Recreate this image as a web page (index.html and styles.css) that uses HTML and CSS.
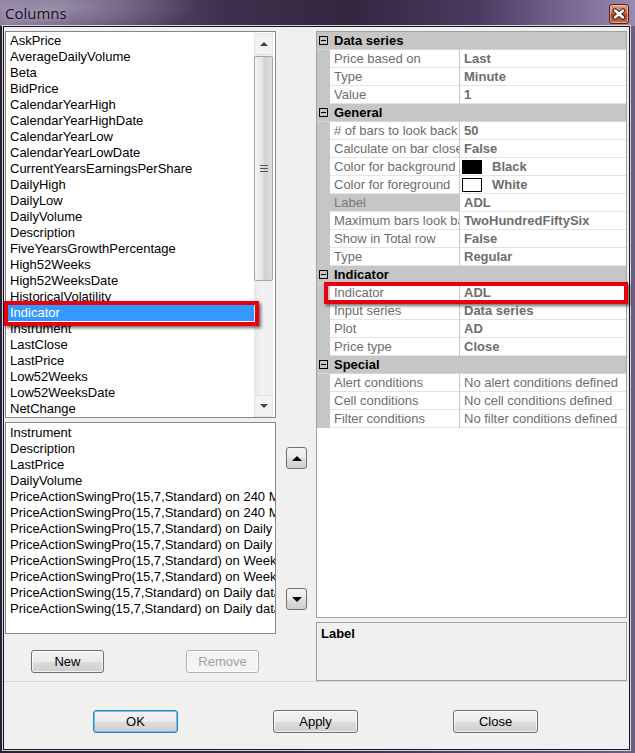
FILE: index.html
```html
<!DOCTYPE html>
<html lang="en">
<head>
  <meta charset="UTF-8" />
  <title>Columns</title>
  <link rel="stylesheet" href="styles.css">
</head>
<body>
  <div class="window">
    <div class="titlebar">
      <span class="title">Columns</span>
      <button class="close-x" title="Close">
        <svg width="14" height="12" viewBox="0 0 14 12">
          <path d="M3 2.5 L11 9.5 M11 2.5 L3 9.5" stroke="#3b2f33" stroke-width="4.6" stroke-linecap="round" fill="none"/>
          <path d="M3 2.5 L11 9.5 M11 2.5 L3 9.5" stroke="#fff" stroke-width="2.4" stroke-linecap="round" fill="none"/>
        </svg>
      </button>
    </div>

    <div class="client">
      <div class="panes">
        <!-- available columns / chosen columns -->
        <div class="col-left">
          <div class="listbox available">
            <ul class="items">
              <li>AskPrice</li>
              <li>AverageDailyVolume</li>
              <li>Beta</li>
              <li>BidPrice</li>
              <li>CalendarYearHigh</li>
              <li>CalendarYearHighDate</li>
              <li>CalendarYearLow</li>
              <li>CalendarYearLowDate</li>
              <li>CurrentYearsEarningsPerShare</li>
              <li>DailyHigh</li>
              <li>DailyLow</li>
              <li>DailyVolume</li>
              <li>Description</li>
              <li>FiveYearsGrowthPercentage</li>
              <li>High52Weeks</li>
              <li>High52WeeksDate</li>
              <li>HistoricalVolatility</li>
              <li class="selected">Indicator<span class="mark"></span></li>
              <li>Instrument</li>
              <li>LastClose</li>
              <li>LastPrice</li>
              <li>Low52Weeks</li>
              <li>Low52WeeksDate</li>
              <li>NetChange</li>
            </ul>
            <div class="vscroll">
              <div class="sb-arrow"><span class="tri up"></span></div>
              <div class="thumb"><span class="grip"></span></div>
              <div class="track"></div>
              <div class="sb-arrow"><span class="tri down"></span></div>
            </div>
          </div>

          <div class="listbox chosen">
            <ul class="items">
              <li>Instrument</li>
              <li>Description</li>
              <li>LastPrice</li>
              <li>DailyVolume</li>
              <li>PriceActionSwingPro(15,7,Standard) on 240 Minute data</li>
              <li>PriceActionSwingPro(15,7,Standard) on 240 Minute data</li>
              <li>PriceActionSwingPro(15,7,Standard) on Daily data</li>
              <li>PriceActionSwingPro(15,7,Standard) on Daily data</li>
              <li>PriceActionSwingPro(15,7,Standard) on Weekly data</li>
              <li>PriceActionSwingPro(15,7,Standard) on Weekly data</li>
              <li>PriceActionSwing(15,7,Standard) on Daily data</li>
              <li>PriceActionSwing(15,7,Standard) on Daily data</li>
            </ul>
          </div>

          <div class="list-buttons">
            <button class="btn">New</button>
            <button class="btn" disabled>Remove</button>
          </div>
        </div>

        <div class="col-mid">
          <button class="move"><span class="tri up"></span></button>
          <button class="move"><span class="tri down"></span></button>
        </div>

        <!-- property grid for the selected column -->
        <div class="col-right">
          <div class="pgrid">
            <div class="cat"><span class="toggle"></span>Data series</div>
            <div class="prop"><span class="name">Price based on</span><span class="val">Last</span></div>
            <div class="prop"><span class="name">Type</span><span class="val">Minute</span></div>
            <div class="prop"><span class="name">Value</span><span class="val">1</span></div>

            <div class="cat"><span class="toggle"></span>General</div>
            <div class="prop"><span class="name"># of bars to look back</span><span class="val">50</span></div>
            <div class="prop"><span class="name">Calculate on bar close</span><span class="val">False</span></div>
            <div class="prop"><span class="name">Color for background</span><span class="val"><span class="swatch black"></span>Black</span></div>
            <div class="prop"><span class="name">Color for foreground</span><span class="val"><span class="swatch white"></span>White</span></div>
            <div class="prop current"><span class="name">Label</span><span class="val">ADL</span></div>
            <div class="prop"><span class="name">Maximum bars look back</span><span class="val">TwoHundredFiftySix</span></div>
            <div class="prop"><span class="name">Show in Total row</span><span class="val">False</span></div>
            <div class="prop"><span class="name">Type</span><span class="val">Regular</span></div>

            <div class="cat"><span class="toggle"></span>Indicator</div>
            <div class="prop marked"><span class="name">Indicator</span><span class="val">ADL</span><span class="mark"></span></div>
            <div class="prop"><span class="name">Input series</span><span class="val">Data series</span></div>
            <div class="prop"><span class="name">Plot</span><span class="val">AD</span></div>
            <div class="prop"><span class="name">Price type</span><span class="val">Close</span></div>

            <div class="cat"><span class="toggle"></span>Special</div>
            <div class="prop"><span class="name">Alert conditions</span><span class="val plain">No alert conditions defined</span></div>
            <div class="prop"><span class="name">Cell conditions</span><span class="val plain">No cell conditions defined</span></div>
            <div class="prop"><span class="name">Filter conditions</span><span class="val plain">No filter conditions defined</span></div>
          </div>
          <div class="help"><b>Label</b></div>
        </div>
      </div>

      <div class="footer">
        <button class="btn wide default">OK</button>
        <button class="btn wide">Apply</button>
        <button class="btn wide">Close</button>
      </div>
    </div>
  </div>
</body>
</html>
```

FILE: styles.css
```css
* {
  box-sizing: border-box;
}

body {
  margin: 0;
  background: #2a1f33;
  font-family: "Liberation Sans", Arial, sans-serif;
  font-size: 13px;
}

ul {
  list-style: none;
  margin: 0;
  padding: 0;
}

button {
  font-family: inherit;
  font-size: 13px;
}

.window {
  width: 635px;
  height: 753px;
  display: flex;
  flex-direction: column;
  background: linear-gradient(to right, #2a1f33 0, #3b2d49 50%, #6c5d82 100%);
  overflow: hidden;
}

/* title bar */
.titlebar {
  height: 26px;
  flex: none;
  display: flex;
  align-items: center;
  justify-content: space-between;
  padding: 0 6px 0 5px;
  background:
    radial-gradient(ellipse 140px 30px at 60px 6px, rgba(190, 180, 200, 0.5), transparent),
    linear-gradient(to right, #85789a 0, #625476 15%, #3f304d 35%, #34263f 55%, #4a3a60 75%, #9a8ab2 100%);
}

.title {
  font-family: "Open Sans", "Noto Sans", sans-serif;
  font-size: 15px;
  color: #14101c;
  text-shadow: 0 0 6px rgba(230, 225, 235, 0.7);
}

.close-x {
  width: 20px;
  height: 20px;
  margin-top: 1px;
  padding: 0;
  border: 1px solid #4a2424;
  border-radius: 3px;
  background: linear-gradient(#e8a08c, #d0603f 50%, #b8381c 51%, #d06a44);
  display: flex;
  align-items: center;
  justify-content: center;
  box-shadow: inset 0 0 0 1px rgba(255, 220, 200, 0.5);
}

/* dialog body */
.client {
  flex: 1;
  margin: 0 5px 3px 3px;
  background: #f0f0f0;
  border: 1px solid #1a141e;
  box-shadow: 0 0 0 1px #d8d4dc;
  display: flex;
  flex-direction: column;
}

.panes {
  display: grid;
  grid-template-columns: 271px 40px 311px;
  padding: 4px 0 0 1px;
  height: 654px;
}

.col-left {
  display: flex;
  flex-direction: column;
}

.listbox {
  border: 1px solid #828790;
  background: #fff;
  display: flex;
}

.listbox.available {
  height: 387px;
  padding-top: 1px;
}

.listbox.chosen {
  height: 212px;
  margin-top: 4px;
  padding-top: 2px;
}

.items {
  flex: 1;
  min-width: 0;
}

.items li {
  height: 16px;
  line-height: 16px;
  padding-left: 4px;
  white-space: nowrap;
  overflow: hidden;
  color: #000;
}

.listbox.available .items li {
  overflow: visible;
}

.items li.selected {
  position: relative;
  background: #3399ff;
  color: #fff;
}

/* red call-out frames */
.mark {
  position: absolute;
  border: 4px solid #e8000c;
  box-shadow: 2px 2px 3px rgba(0, 0, 0, 0.55);
  pointer-events: none;
}

.items li.selected .mark {
  top: -4px;
  left: -2px;
  right: -5px;
  bottom: -5px;
}

/* vertical scrollbar */
.vscroll {
  width: 19px;
  margin-right: 2px;
  display: flex;
  flex-direction: column;
  background: linear-gradient(to right, #e6e6e6, #f2f2f2 40%, #eeeeee);
}

.sb-arrow {
  height: 22px;
  display: flex;
  align-items: center;
  justify-content: center;
  background: #f2f2f2;
  border: 1px solid #e4e4e4;
}

.thumb {
  height: 225px;
  margin: 1px 0;
  border: 1px solid #a6a6a6;
  border-radius: 2px;
  background: linear-gradient(to right, #f4f4f4, #e2e2e2 45%, #d2d2d2 55%, #dcdcdc);
  display: flex;
  align-items: center;
  justify-content: center;
}

.grip {
  width: 8px;
  height: 7px;
  border-top: 1px solid #555;
  border-bottom: 1px solid #555;
  background: linear-gradient(transparent 2px, #555 2px, #555 3px, transparent 3px);
}

.track {
  flex: 1;
}

.tri {
  width: 0;
  height: 0;
  border-left: 4px solid transparent;
  border-right: 4px solid transparent;
}

.tri.up {
  border-bottom: 4px solid #404040;
}

.tri.down {
  border-top: 4px solid #404040;
}

.list-buttons {
  display: flex;
  gap: 82px;
  padding: 16px 0 0 26px;
}

/* push buttons */
.btn {
  width: 73px;
  height: 23px;
  padding: 0;
  color: #000;
  border: 1px solid #707070;
  border-radius: 3px;
  background: linear-gradient(#f2f2f2, #ebebeb 50%, #dddddd 51%, #cfcfcf);
  box-shadow: inset 0 0 0 1px rgba(255, 255, 255, 0.7);
}

.btn:disabled {
  color: #a0a0a0;
  border-color: #adb2b5;
  background: #f4f4f4;
}

.btn.wide {
  width: 85px;
}

.btn.default {
  border-color: #3c7fb1;
  box-shadow: inset 0 0 0 1px #63c4ef;
}

.col-mid {
  display: flex;
  flex-direction: column;
  padding: 416px 0 0 10px;
  gap: 119px;
}

.move {
  width: 21px;
  height: 22px;
  padding: 0;
  border: 1px solid #707070;
  border-radius: 3px;
  background: linear-gradient(#f2f2f2, #ebebeb 50%, #dddddd 51%, #cfcfcf);
  display: flex;
  align-items: center;
  justify-content: center;
}

.move .tri {
  border-left-width: 5px;
  border-right-width: 5px;
}

.move .tri.up {
  border-bottom-width: 5px;
  border-bottom-color: #000;
}

.move .tri.down {
  border-top-width: 5px;
  border-top-color: #000;
}

/* property grid */
.col-right {
  display: flex;
  flex-direction: column;
}

.pgrid {
  height: 587px;
  border: 1px solid #a0a0a0;
  background: #fff;
}

.cat {
  height: 18px;
  display: flex;
  align-items: center;
  padding-left: 2px;
  background: #c6c6c6;
  font-weight: bold;
  color: #000;
  border-bottom: 1px solid #d6d6d6;
}

.toggle {
  width: 9px;
  height: 9px;
  margin-right: 6px;
  border: 1px solid #000;
  background: linear-gradient(transparent 3px, #000 3px, #000 4px, transparent 4px) 1px 0 / 5px 100% no-repeat;
}

.prop {
  height: 18px;
  display: grid;
  grid-template-columns: 130px 1fr;
  padding-left: 13px;
  background: #c6c6c6;
  color: #6d6d6d;
}

.prop .name,
.prop .val {
  background: #fff;
  border-bottom: 1px solid #e4e4e4;
  line-height: 17px;
  white-space: nowrap;
  overflow: hidden;
}

.prop .name {
  padding-left: 4px;
  border-right: 1px solid #c6c6c6;
}

.prop .val {
  padding-left: 4px;
  font-weight: bold;
  display: flex;
  align-items: center;
}

.prop .val.plain {
  font-weight: normal;
}

.prop.current .name {
  background: #c6c6c6;
  color: #7a7a7a;
}

.prop.marked {
  position: relative;
}

.prop.marked .mark {
  top: -2px;
  left: 7px;
  right: -2px;
  bottom: -2px;
}

.swatch {
  width: 20px;
  height: 14px;
  margin: 0 10px 0 -2px;
  border: 1px solid #000;
}

.swatch.black {
  background: #000;
}

.swatch.white {
  background: #fff;
}

.help {
  height: 59px;
  margin-top: 4px;
  border: 1px solid #a0a0a0;
  padding: 3px 4px;
  color: #000;
}

/* OK / Apply / Close */
.footer {
  flex: 1;
  border-top: 1px solid #dadada;
  display: flex;
  gap: 95px;
  padding: 28px 0 0 89px;
}
```
